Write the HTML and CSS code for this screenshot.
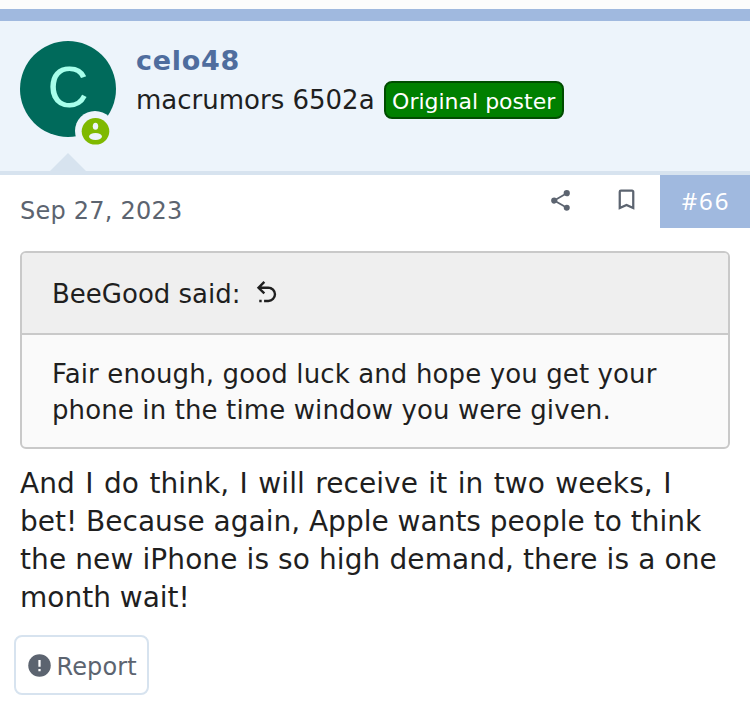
FILE: index.html
```html
<!DOCTYPE html>
<html lang="en">
<head>
<meta charset="utf-8">
<title>Forum post</title>
<link rel="stylesheet" href="styles.css">
</head>
<body>
<article class="post">
  <header class="user">
    <div class="avatar">
      <span class="avatar-letter">C</span>
      <svg class="badge" viewBox="0 0 40 40"><circle cx="20" cy="20" r="20" fill="#edf4fb"/><ellipse cx="20.5" cy="20.3" rx="13.8" ry="13.3" fill="#7fb900"/><ellipse cx="20.5" cy="15.3" rx="2.7" ry="3.5" fill="#edf4fb"/><ellipse cx="20.5" cy="25.5" rx="6.5" ry="3.5" fill="#edf4fb"/></svg>
    </div>
    <div class="user-info">
      <a class="name">celo48</a>
      <div class="title-row"><span class="title">macrumors 6502a</span><span class="op">Original poster</span></div>
    </div>
  </header>
  <div class="meta">
    <time class="date">Sep 27, 2023</time>
    <div class="actions">
      <svg class="share" viewBox="0 0 24 24"><path d="M18,16.08C17.24,16.08 16.56,16.38 16.04,16.85L8.91,12.7C8.96,12.47 9,12.24 9,12C9,11.76 8.96,11.53 8.91,11.3L15.96,7.19C16.5,7.69 17.21,8 18,8A3,3 0 0,0 21,5A3,3 0 0,0 18,2A3,3 0 0,0 15,5C15,5.24 15.04,5.47 15.09,5.7L8.04,9.81C7.5,9.31 6.79,9 6,9A3,3 0 0,0 3,12A3,3 0 0,0 6,15C6.79,15 7.5,14.69 8.04,14.19L15.16,18.34C15.11,18.55 15.08,18.77 15.08,19C15.08,20.61 16.39,21.91 18,21.91C19.61,21.91 20.92,20.61 20.92,19A2.92,2.92 0 0,0 18,16.08Z"/></svg>
      <svg class="bookmark" viewBox="0 0 24 24"><path d="M17,18L12,15.82L7,18V5H17M17,3H7A2,2 0 0,0 5,5V21L12,18L19,21V5C19,3.89 18.1,3 17,3Z"/></svg>
      <a class="number">#66</a>
    </div>
  </div>
  <div class="content">
    <blockquote class="quote">
      <div class="quote-head"><span>BeeGood said:</span><svg class="undo" viewBox="0 0 24 24"><path d="M13.5,7A6.5,6.5 0 0,1 20,13.5A6.5,6.5 0 0,1 13.5,20H10V18H13.5C16,18 18,16 18,13.5C18,11 16,9 13.5,9H7.83L10.91,12.09L9.5,13.5L4,8L9.5,2.5L10.92,3.91L7.83,7H13.5M6,18H8V20H6V18Z"/></svg></div>
      <div class="quote-body">Fair enough, good luck and hope you get your<br>phone in the time window you were given.</div>
    </blockquote>
    <p class="text"><span class="t1">And I do think, I will receive it in two weeks, I</span><br>bet! Because again, Apple wants people to think<br><span class="t3">the new iPhone is so high demand, there is a one</span><br>month wait!</p>
  </div>
  <a class="report"><svg viewBox="0 0 24 24"><circle cx="12" cy="12" r="10"/><path class="bang" d="M11 7h2v6h-2zM11 15h2v2h-2z"/></svg><span>Report</span></a>
</article>
</body>
</html>
```
FILE: styles.css
```css
* { box-sizing: border-box; }
body {
  margin: 0;
  background: #fff;
  color: #1f1f1f;
  font-family: Verdana, "DejaVu Sans", sans-serif;
  font-size: 26px;
}
svg { display: block; flex: none; }
.post { border-top: 9px solid #fcfcfc; white-space: nowrap; }
.user {
  position: relative;
  display: flex;
  gap: 20px;
  height: 166px;
  padding: 20px;
  border-top: 12px solid #a0b9df;
  border-bottom: 4px solid #d7e3ef;
  background: #edf4fb;
}
.user::after {
  content: "";
  position: absolute;
  left: 50px;
  bottom: 0;
  border: 18px solid transparent;
  border-top: 0;
  border-bottom-color: #d7e3ef;
}
.avatar {
  position: relative;
  display: flex;
  align-items: center;
  justify-content: center;
  width: 96px;
  height: 96px;
  padding-bottom: 3px;
  border-radius: 50%;
  background: #006a5b;
  color: #a7ffeb;
}
.avatar-letter { font: 57px/93px "Liberation Sans", sans-serif; }
.badge { position: absolute; left: 55px; top: 70px; width: 40px; height: 40px; }
.name { display: block; height: 40px; font-size: 27px; line-height: 40px; font-weight: bold; letter-spacing: 0.7px; color: #4f6d9e; }
.title-row { display: flex; align-items: center; gap: 9.5px; height: 38px; }
.op {
  width: 180px;
  height: 38px;
  padding-left: 6px;
  border: 2px solid #004d00;
  border-radius: 8px;
  background: #008000;
  color: #fff;
  font-size: 22px;
  line-height: 37px;
}
.meta { display: flex; justify-content: space-between; height: 76px; padding-left: 20px; color: #5c6470; }
.date { font-size: 24px; line-height: 73px; letter-spacing: 0.22px; }
.actions { display: flex; }
.actions svg, .report svg { fill: #5c6470; }
.share { width: 25px; height: 25px; margin: 12.5px 39.5px 0 0; }
.bookmark { width: 27px; height: 27px; margin: 11px 20.5px 0 0; }
.number {
  width: 90px;
  height: 53px;
  padding-left: 2px;
  background: #a0b9df;
  color: #fff;
  font: 24px/52px "Noto Sans", sans-serif;
  letter-spacing: 1.8px;
  text-align: center;
}
.content { padding: 0 20px; }
.quote { margin: 0; border: 2px solid #c9c9c9; border-radius: 6px; background: #fafafa; overflow: hidden; }
.quote-head {
  display: flex;
  align-items: center;
  gap: 11px;
  height: 82px;
  padding: 2px 30px 0;
  border-bottom: 2px solid #c9c9c9;
  background: #efefef;
  font-size: 26px;
}
.undo { width: 29px; height: 29px; margin-bottom: 3px; fill: #1f1f1f; }
.quote-body { height: 112px; padding: 21px 30px 0; font-size: 26px; line-height: 36px; letter-spacing: 0.12px; }
.text { margin: 16px 0 0; font-size: 28px; line-height: 38px; }
.t1 { letter-spacing: 0.05px; word-spacing: 1.5px; }
.t3 { letter-spacing: 0.1px; }
.report {
  display: flex;
  align-items: center;
  gap: 4px;
  width: 135px;
  height: 60px;
  margin: 18px 0 0 14px;
  padding-left: 9.5px;
  border: 2px solid #d7e3ef;
  border-radius: 8px;
  color: #5c6470;
  font-size: 24px;
}
.report span { padding-top: 4px; letter-spacing: 0.1px; }
.report svg { width: 27px; height: 27px; }
.report .bang { fill: #fff; }
```
